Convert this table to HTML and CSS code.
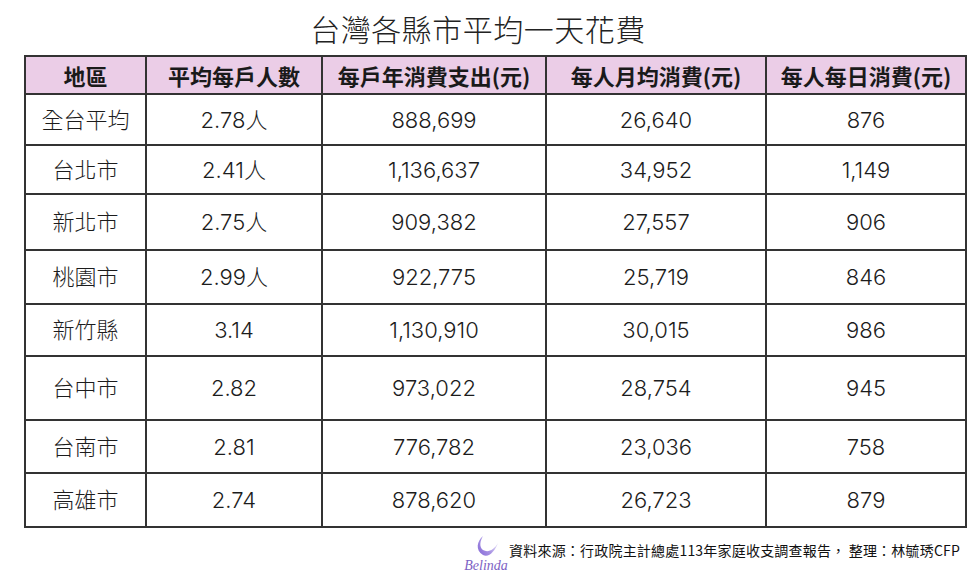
FILE: index.html
```html
<!DOCTYPE html>
<html lang="zh-Hant">
<head>
<meta charset="utf-8">
<title>台灣各縣市平均一天花費</title>
<link rel="stylesheet" href="styles.css">
</head>
<body>
<div class="page">
  <h1 class="title">台灣各縣市平均一天花費</h1>
  <table class="data">
    <colgroup>
      <col class="c1"><col class="c2"><col class="c3"><col class="c4"><col class="c5">
    </colgroup>
    <thead>
      <tr>
        <th>地區</th>
        <th>平均每戶人數</th>
        <th>每戶年消費支出(元)</th>
        <th>每人月均消費(元)</th>
        <th>每人每日消費(元)</th>
      </tr>
    </thead>
    <tbody>
      <tr><td>全台平均</td><td>2.78人</td><td>888,699</td><td>26,640</td><td>876</td></tr>
      <tr><td>台北市</td><td>2.41人</td><td>1,136,637</td><td>34,952</td><td>1,149</td></tr>
      <tr><td>新北市</td><td>2.75人</td><td>909,382</td><td>27,557</td><td>906</td></tr>
      <tr><td>桃園市</td><td>2.99人</td><td>922,775</td><td>25,719</td><td>846</td></tr>
      <tr><td>新竹縣</td><td>3.14</td><td>1,130,910</td><td>30,015</td><td>986</td></tr>
      <tr><td>台中市</td><td>2.82</td><td>973,022</td><td>28,754</td><td>945</td></tr>
      <tr><td>台南市</td><td>2.81</td><td>776,782</td><td>23,036</td><td>758</td></tr>
      <tr><td>高雄市</td><td>2.74</td><td>878,620</td><td>26,723</td><td>879</td></tr>
    </tbody>
  </table>
  <div class="footer">
    <div class="logo">
      <svg class="moon" width="26" height="23" viewBox="0 0 26 23">
        <defs>
          <linearGradient id="mg" x1="0" y1="0.8" x2="1" y2="0.2">
            <stop offset="0" stop-color="#8a6fd8"/>
            <stop offset="0.45" stop-color="#a994e4"/>
            <stop offset="1" stop-color="#f0ecfb"/>
          </linearGradient>
        </defs>
        <path d="M9 1 C3 6 1 15 9 20 C15 23 21 16 24 8 C20 15 14 18 9 15 C5 12 6 6 9 1 Z" fill="url(#mg)"/>
      </svg>
      <span class="brand">Belinda</span>
    </div>
    <p class="source">資料來源：行政院主計總處113年家庭收支調查報告， 整理：林毓琇CFP</p>
  </div>
</div>
</body>
</html>
```

FILE: styles.css
```css
html, body {
  margin: 0;
  padding: 0;
  background: #ffffff;
}

body {
  font-family: "Noto Sans CJK TC", "Noto Sans", sans-serif;
  color: #1c1c1c;
}

.page {
  width: 980px;
  height: 573px;
  overflow: hidden;
}

.title {
  margin: 0;
  height: 55px;
  display: flex;
  align-items: center;
  justify-content: center;
  padding-right: 24px;
  font-size: 30px;
  font-weight: 300;
  letter-spacing: 0.5px;
  color: #222;
  line-height: 1;
}

.data {
  margin-left: 24px;
  width: 941px;
  border-collapse: collapse;
  table-layout: fixed;
}

.c1 { width: 121px; }
.c2 { width: 176px; }
.c3 { width: 224px; }
.c4 { width: 220px; }
.c5 { width: 200px; }

.data th,
.data td {
  border: 2px solid #333;
  text-align: center;
  padding: 0;
  line-height: 1;
}

.data th {
  background: #ebcde7;
  height: 36px;
  font-size: 22px;
  font-weight: 700;
  color: #1a1a1a;
}

.data td {
  font-family: "Inter", "Noto Sans CJK TC", sans-serif;
  font-size: 22px;
  font-weight: 300;
  color: #1c1c1c;
}

.data tbody tr:nth-child(1) td { height: 49px; }
.data tbody tr:nth-child(2) td { height: 47px; }
.data tbody tr:nth-child(3) td { height: 54px; }
.data tbody tr:nth-child(4) td { height: 52px; }
.data tbody tr:nth-child(5) td { height: 50px; }
.data tbody tr:nth-child(6) td { height: 62px; }
.data tbody tr:nth-child(7) td { height: 51px; }
.data tbody tr:nth-child(8) td { height: 52px; }

.footer {
  display: flex;
  justify-content: flex-end;
  align-items: flex-start;
  padding-right: 20px;
  padding-top: 7px;
  gap: 4px;
}

.logo {
  display: flex;
  flex-direction: column;
  align-items: center;
  width: 38px;
}

.moon {
  display: block;
  margin-left: 2px;
}

.brand {
  font-family: "Liberation Serif", serif;
  font-style: italic;
  font-size: 14px;
  color: #7d62c4;
  line-height: 1;
  margin-top: 1px;
}

.source {
  margin: 8px 0 0 0;
  font-size: 14px;
  line-height: 1;
  color: #111;
  letter-spacing: 0.2px;
}
```
